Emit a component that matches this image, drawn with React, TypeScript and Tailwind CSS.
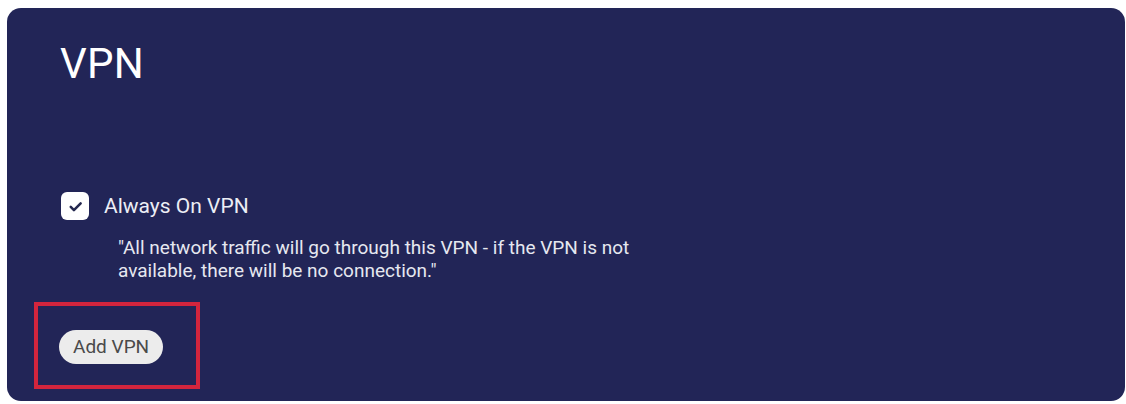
import React from 'react';

const CheckIcon = () => (
  <svg width="19" height="19" viewBox="0 0 24 24" fill="none" stroke="#24284f" strokeWidth="3.2" strokeLinecap="round" strokeLinejoin="round">
    <path d="M6 12.5l4 4L18.5 8" />
  </svg>
);

export default function App() {
  return (
    <div className="w-[1126px] h-[404px] bg-white pt-[8px] pl-[7px] pr-[1px] pb-[3px] font-['Roboto',sans-serif]">
      <div className="h-full rounded-[14px] bg-[#222557] pl-[53px] pt-[32px] flex flex-col">
        {/* Title */}
        <h1 className="text-[42px] leading-[48px] text-white tracking-[0.3px]">VPN</h1>

        {/* Always on */}
        <div className="mt-[104px] flex items-center gap-[15px] ml-[1px]">
          <div className="w-[28px] h-[28px] rounded-[6px] bg-white flex items-center justify-center">
            <CheckIcon />
          </div>
          <span className="text-[21px] leading-[28px] text-[#eceef5]">Always On VPN</span>
        </div>
        <p className="ml-[58px] mt-[16px] text-[19px] leading-[23px] text-[#e6e8f0] w-[560px]">
          "All network traffic will go through this VPN - if the VPN is not available, there will be no connection."
        </p>

        {/* Add VPN */}
        <div className="mt-[20px] -ml-[26px] w-[166px] h-[87px] border-[4px] border-[#d3253d] flex items-start pt-[24px] pl-[21px]">
          <button className="h-[34px] px-[14px] rounded-full bg-[#ececec] text-[19px] leading-[34px] text-[#4a4a4a]">
            Add VPN
          </button>
        </div>
      </div>
    </div>
  );
}
